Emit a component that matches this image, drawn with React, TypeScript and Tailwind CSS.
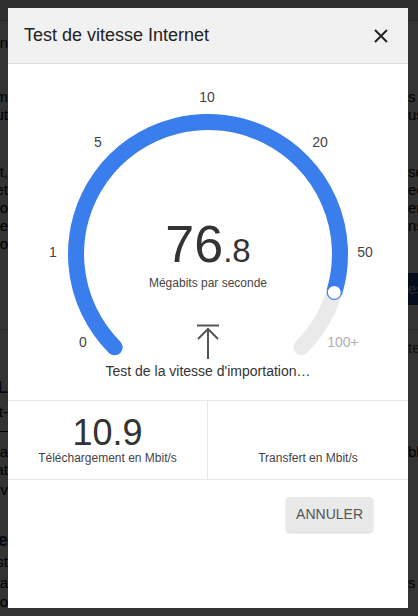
import React from "react";

type RowProps = { left?: string; right?: string; cls?: string; text?: string };

function Row({ left = "", right = "", cls = "", text = "" }: RowProps) {
  return (
    <div className={`flex h-[18px] leading-[18px] ${cls}`}>
      <span className={`flex w-[8px] justify-end overflow-hidden whitespace-nowrap ${text}`}>{left}</span>
      <span className="flex-1" />
      <span className={`w-[10px] overflow-hidden whitespace-nowrap ${text}`}>{right}</span>
    </div>
  );
}

function Gauge() {
  return (
    <div className="relative h-[336px]">
      <svg className="absolute left-0 top-0" width="400" height="336" viewBox="0 0 400 336">
        <path
          d="M106.66 283.34 A132 132 0 1 1 293.34 283.34"
          stroke="#eaeaea"
          strokeWidth="16"
          fill="none"
          strokeLinecap="round"
        />
        <path
          d="M106.66 283.34 A132 132 0 1 1 326.3 228.4"
          stroke="#3a7ded"
          strokeWidth="16"
          fill="none"
          strokeLinecap="butt"
        />
        <circle cx="106.66" cy="283.34" r="8" fill="#3a7ded" />
        <circle cx="326.3" cy="228.4" r="7" fill="#ffffff" stroke="#3a7ded" strokeWidth="1.2" />
      </svg>

      <span className="absolute left-[75px] top-[278px] -translate-x-1/2 -translate-y-1/2 text-[14px] leading-none text-[#444]">0</span>
      <span className="absolute left-[45px] top-[188px] -translate-x-1/2 -translate-y-1/2 text-[14px] leading-none text-[#444]">1</span>
      <span className="absolute left-[90px] top-[78px] -translate-x-1/2 -translate-y-1/2 text-[14px] leading-none text-[#444]">5</span>
      <span className="absolute left-[199px] top-[33px] -translate-x-1/2 -translate-y-1/2 text-[14px] leading-none text-[#444]">10</span>
      <span className="absolute left-[312px] top-[78px] -translate-x-1/2 -translate-y-1/2 text-[14px] leading-none text-[#444]">20</span>
      <span className="absolute left-[357px] top-[188px] -translate-x-1/2 -translate-y-1/2 text-[14px] leading-none text-[#444]">50</span>
      <span className="absolute left-[335px] top-[278px] -translate-x-1/2 -translate-y-1/2 text-[14px] leading-none text-[#b0b0b0]">100+</span>

      <div className="relative flex flex-col items-center pt-[154px]">
        <div className="flex h-[52px] items-baseline text-[#333]">
          <span className="text-[52px] leading-[52px]">76</span>
          <span className="text-[33px] leading-[33px]">.8</span>
        </div>
        <div className="mt-[5px] text-[12px] leading-[16px] text-[#444]">Mégabits par seconde</div>
        <svg className="mt-[33px]" width="24" height="36" viewBox="0 0 24 36">
          <path d="M1 1.5H23" stroke="#555" strokeWidth="2" fill="none" />
          <path d="M12 4.5V35" stroke="#555" strokeWidth="2" fill="none" />
          <path d="M2 15L12 5L22 15" stroke="#555" strokeWidth="2" fill="none" />
        </svg>
        <div className="mt-[1px] text-[14px] leading-[20px] text-[#333]">Test de la vitesse d'importation…</div>
      </div>
    </div>
  );
}

export default function App() {
  return (
    <div className="relative h-[616px] w-[418px] overflow-hidden bg-white font-['Liberation_Sans',Arial,sans-serif] text-[15px] text-black">
      {/* page behind the dialog */}
      <div className="flex flex-col">
        <div className="h-[21px] border-b border-[#c8c8c8] bg-[#e9e9e9]" />
        <Row cls="mt-[13px]" left="rn" />
        <Row cls="mt-[36px]" left="m" right="s d" />
        <Row left="ut" right="us" />
        <Row cls="mt-[39px]" left="t," right="se" />
        <Row left="et" right="ed" />
        <Row left="o" right="er" />
        <Row left="re" right="ns" />
        <Row left="co" />
        <div className="mt-[20px] flex h-[32px]">
          <span className="flex-1" />
          <span className="w-[10px] overflow-hidden whitespace-nowrap bg-[#1d3f86] text-[15px] leading-[32px] text-[#cfd9ee]">es</span>
        </div>
        <div className="h-[25px] border-b border-[#d0d0d0]" />
        <Row cls="mt-[9px]" right="te" text="text-[#555]" />
        <Row cls="mt-[22px]" left="SL" text="font-bold text-[17px] text-[#1a2a6a]" />
        <Row cls="mt-[6px]" left="t-" />
        <Row left="—" />
        <Row cls="mt-[4px]" left="a" right="bl" />
        <Row left="at" />
        <Row cls="mt-[2px]" left="v" />
        <Row cls="mt-[32px]" left="ee" text="font-bold text-[18px] text-[#1a2a6a]" />
        <Row cls="mt-[4px]" left="st" />
        <Row cls="mt-[3px]" left="a" right="s" />
        <Row cls="mt-[1px]" left="io" />
      </div>

      {/* overlay + dialog */}
      <div className="absolute inset-0 bg-black/80 p-2">
        <div className="flex h-[600px] w-[400px] flex-col bg-white">
          <div className="flex h-[56px] shrink-0 items-center justify-between border-b border-[#dcdcdc] bg-[#f1f1f1] pl-4 pr-5">
            <span className="text-[18px] text-[#222]">Test de vitesse Internet</span>
            <svg width="14" height="14" viewBox="0 0 14 14">
              <path d="M1 1L13 13M13 1L1 13" stroke="#222" strokeWidth="2" fill="none" />
            </svg>
          </div>

          <Gauge />

          <div className="flex h-[80px] shrink-0 border-y border-[#e6e6e6]">
            <div className="flex w-1/2 flex-col items-center justify-end border-r border-[#e6e6e6] pb-[14px]">
              <span className="text-[36px] leading-[36px] text-[#333]">10.9</span>
              <span className="text-[12px] leading-[14px] text-[#444]">Téléchargement en Mbit/s</span>
            </div>
            <div className="flex w-1/2 flex-col items-center justify-end pb-[14px]">
              <span className="text-[12px] leading-[14px] text-[#444]">Transfert en Mbit/s</span>
            </div>
          </div>

          <div className="flex justify-end pr-[35px] pt-[17px]">
            <button className="h-[35px] rounded-[4px] bg-[#e9e9e9] px-[10px] text-[14px] text-[#555] shadow-[0_1px_2px_rgba(0,0,0,0.18)]">
              ANNULER
            </button>
          </div>
        </div>
      </div>
    </div>
  );
}
